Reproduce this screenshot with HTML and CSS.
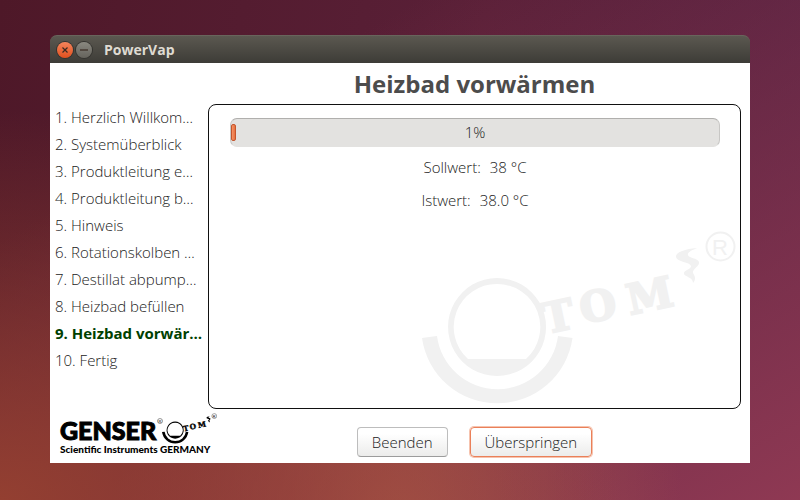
FILE: index.html
```
<!DOCTYPE html>
<html lang="de">
<head>
  <meta charset="UTF-8">
  <title>PowerVap</title>
  <link rel="stylesheet" href="styles.css">
</head>

<body>
  <div class="window">
    <div class="titlebar">
      <button type="button" class="win-btn close" aria-label="Schließen">
        <svg viewBox="0 0 16 16"><path d="M5.5 5.5l5 5M10.5 5.5l-5 5"/></svg>
      </button>
      <button type="button" class="win-btn minimize" aria-label="Minimieren">
        <svg viewBox="0 0 16 16"><path d="M4 8h8"/></svg>
      </button>
      <span class="title">PowerVap</span>
    </div>

    <div class="content">
      <div class="sidebar">
        <ol class="steps">
          <li>1. Herzlich Willkom…</li>
          <li>2. Systemüberblick</li>
          <li>3. Produktleitung e…</li>
          <li>4. Produktleitung b…</li>
          <li>5. Hinweis</li>
          <li>6. Rotationskolben …</li>
          <li>7. Destillat abpump…</li>
          <li>8. Heizbad befüllen</li>
          <li class="active">9. Heizbad vorwär…</li>
          <li>10. Fertig</li>
        </ol>
        <svg class="logo" viewBox="0 0 160 44" role="img" aria-label="GENSER Scientific Instruments GERMANY">
          <text class="logo-name" x="0" y="27">GENSER</text>
          <circle class="logo-reg" cx="100" cy="8" r="2.5"/>
          <text class="logo-r" x="98.5" y="9.5">R</text>
          <text class="logo-sub" x="0" y="40">Scientific Instruments GERMANY</text>
          <use href="#atom" x="102" y="0" width="55" height="31"/>
        </svg>
      </div>

      <div class="main">
        <h1>Heizbad vorwärmen</h1>
        <div class="panel">
          <svg class="watermark" viewBox="0 0 314 173" aria-hidden="true">
            <symbol id="atom" viewBox="0 0 314 173">
              <!-- bath -->
              <path d="M0 107A76 76 0 0 0 150.500 107L136 105A61 61 0 0 1 15 105Z"/>
              <!-- flask -->
              <path fill-rule="evenodd" d="M75 47a49 49 0 1 0 .1 0ZM75 53a43 43 0 0 1 29 75H46A43 43 0 0 1 75 53Z"/>
              <g class="atom-text">
                <text transform="translate(124 103) rotate(-12)">T</text>
                <text transform="translate(161 93) rotate(-12)">O</text>
                <text transform="translate(208 84) rotate(-12)">M</text>
              </g>
              <!-- steam -->
              <path d="M275 17C262 18 253 22 254 26C255 31 268 31 269 35C269 39 261 39 262 43C263 46 271 46 271 52C275 47 272 44 271 42C270 38 278 35 277 31C276 27 266 27 266 24C265 21 271 19 275 17Z"/>
              <circle class="atom-ring" cx="298.500" cy="15.500" r="14"/>
              <text class="atom-r" x="290" y="24">R</text>
            </symbol>
            <use href="#atom" width="314" height="173"/>
          </svg>
          <div class="progress" role="progressbar" aria-valuenow="1" aria-valuemin="0" aria-valuemax="100" aria-label="Heizbad vorwärmen">
            <div class="progress-fill" style="width: 1%"></div>
            <span class="progress-text">1%</span>
          </div>
          <div class="value"><span>Sollwert:</span><span>38 °C</span></div>
          <div class="value"><span>Istwert:</span><span>38.0 °C</span></div>
        </div>
        <div class="actions">
          <button type="button" class="btn">Beenden</button>
          <button type="button" class="btn focused">Überspringen</button>
        </div>
      </div>
    </div>
  </div>
</body>
</html>
```
FILE: styles.css
```
* {
  box-sizing: border-box;
}

body {
  margin: 0;
  min-height: 100vh;
  padding: 35px 50px 37px;
  display: flex;
  font-family: "Open Sans", "Noto Sans", sans-serif;
  font-size: 15px;
  font-weight: 300;
  color: #222;
  background:
    radial-gradient(ellipse at 0% 100%, rgba(152, 66, 48, 0.9), transparent 55%),
    radial-gradient(ellipse at 50% 105%, #a3524a, transparent 50%),
    linear-gradient(150deg, transparent 25%, rgba(146, 58, 84, 0.95)),
    linear-gradient(100deg, #4e1828 0%, #5a2038 55%, #4f1f40 100%);
}

.window {
  flex: 1;
  display: flex;
  flex-direction: column;
}

.titlebar {
  display: flex;
  align-items: center;
  gap: 3px;
  height: 28px;
  padding-left: 7px;
  background: linear-gradient(#5b5850, #3d3c37);
  border-top: 1px solid #68655c;
  border-radius: 7px 7px 0 0;
}

.win-btn {
  width: 16px;
  height: 16px;
  padding: 0;
  border: 0;
  border-radius: 50%;
  box-shadow: 0 0 0 1px #34332f;
}

.win-btn svg {
  display: block;
  fill: none;
  stroke: #3a2a22;
  stroke-width: 1.2;
}

.close {
  background: linear-gradient(#f4845c, #e1501e);
}

.minimize {
  background: linear-gradient(#8a8880, #65635c);
}

.title {
  margin-left: 9px;
  font-size: 14px;
  font-weight: 700;
  color: #dfdbd2;
}

.content {
  flex: 1;
  display: grid;
  grid-template-columns: 158px 1fr;
  background: #fff;
}

.sidebar {
  display: flex;
  flex-direction: column;
  justify-content: space-between;
  padding: 41px 0 6px 5px;
}

.steps {
  margin: 0;
  padding: 0;
  list-style: none;
}

.steps li {
  line-height: 27px;
  white-space: nowrap;
}

.steps .active {
  font-weight: 700;
  color: #004000;
}

.logo {
  width: 160px;
  height: 44px;
  margin-left: 5px;
  overflow: visible;
  position: relative;
}

.logo-name {
  font: 900 25px Lato, sans-serif;
  stroke: #000;
  stroke-width: 1;
}

.logo-sub {
  font: 900 10px Lato, sans-serif;
}

.logo-reg {
  fill: none;
  stroke: #333;
  stroke-width: 0.5;
}

.logo-r {
  font: 4px "Liberation Sans", sans-serif;
}

.main {
  display: flex;
  flex-direction: column;
  padding-right: 9px;
}

h1 {
  margin: 0;
  font-size: 24px;
  font-weight: 700;
  line-height: 41px;
  text-align: center;
  color: #4c4c4c;
}

.panel {
  flex: 1;
  position: relative;
  padding: 13px 20px 0 21px;
  border: 1px solid #111;
  border-radius: 8px;
}

.watermark {
  position: absolute;
  right: 4px;
  bottom: 4px;
  width: 314px;
  height: 173px;
  fill: #f1f1f1;
  color: #f1f1f1;
}

.logo {
  color: #000;
}

.atom-text {
  font: 700 42px "DejaVu Serif", serif;
  stroke: currentColor;
  stroke-width: 2;
}

.atom-ring {
  fill: none;
  stroke: currentColor;
  stroke-width: 2;
}

.atom-r {
  font: 22px "Liberation Sans", sans-serif;
}

.progress {
  position: relative;
  display: flex;
  align-items: center;
  height: 29px;
  border: 1px solid #c8c7c5;
  border-top-color: #b0afad;
  border-bottom-color: #e3e2e0;
  border-radius: 7px;
  background: #e3e2e0;
}

.progress-fill {
  height: 17px;
  border: 1px solid #c4552c;
  border-radius: 2px;
  background: linear-gradient(90deg, #f49468, #e8703f);
}

.progress-text {
  position: absolute;
  inset: 0;
  line-height: 27px;
  text-align: center;
}

.value {
  position: relative;
  display: flex;
  justify-content: center;
  gap: 9px;
  margin-top: 8px;
  line-height: 25px;
}

.actions {
  display: flex;
  justify-content: center;
  gap: 22px;
  padding: 18px 0 6px;
}

.btn {
  height: 30px;
  padding: 0 14px;
  border: 1px solid #bdbdbd;
  border-bottom-color: #9c9c9c;
  border-radius: 4px;
  background: linear-gradient(#fff 20%, #ececeb);
  font: inherit;
  color: #222;
}

.focused {
  border-color: #ea8059;
  box-shadow: 0 0 0 1px #f6c3ae;
}
```
